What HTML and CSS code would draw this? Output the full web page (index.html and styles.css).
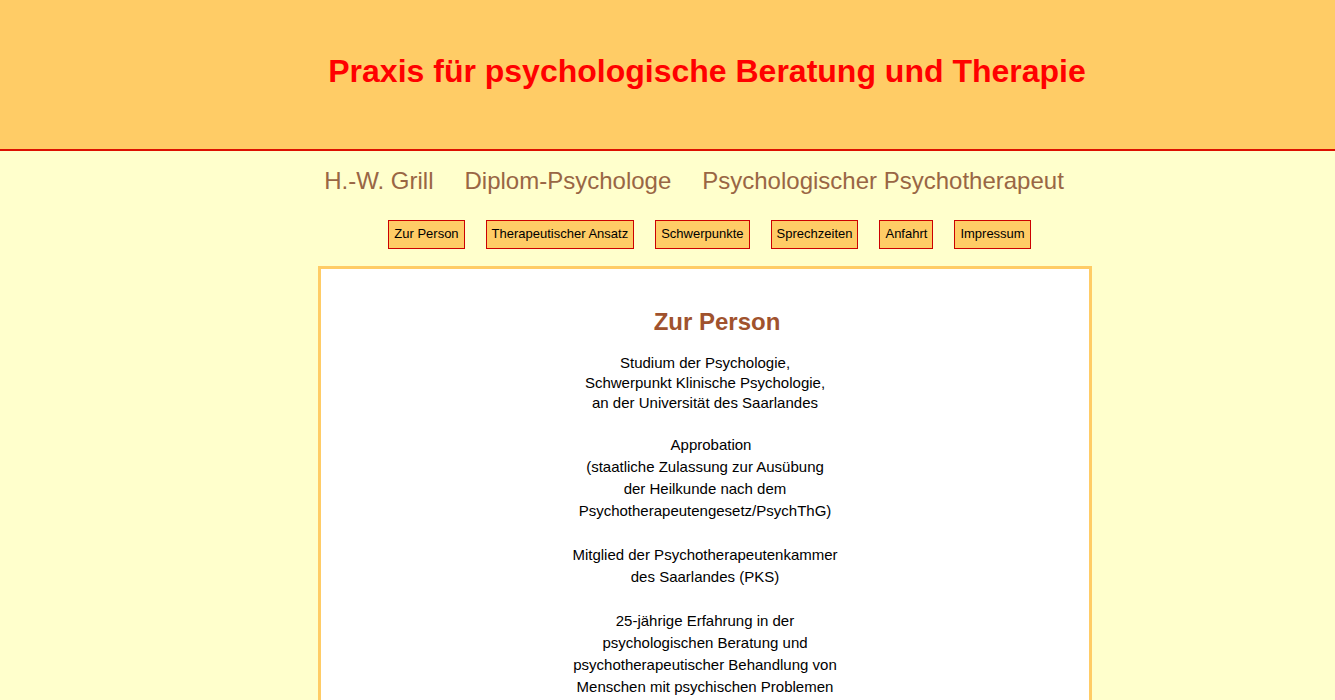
FILE: index.html
```html
<!DOCTYPE html>
<html lang="de">
<head>
<meta charset="utf-8">
<title>Praxis für psychologische Beratung und Therapie</title>
<link rel="stylesheet" href="styles.css">
</head>
<body>
<header class="site-header">
  <div class="wrap">
    <h1 class="site-title">Praxis für psychologische Beratung und Therapie</h1>
  </div>
</header>
<div class="wrap">
  <div class="subtitle">
    <span>H.-W. Grill</span>
    <span>Diplom-Psychologe</span>
    <span>Psychologischer Psychotherapeut</span>
  </div>
  <nav class="nav">
    <a class="nav-btn" href="#">Zur Person</a>
    <a class="nav-btn" href="#">Therapeutischer Ansatz</a>
    <a class="nav-btn" href="#">Schwerpunkte</a>
    <a class="nav-btn" href="#">Sprechzeiten</a>
    <a class="nav-btn" href="#">Anfahrt</a>
    <a class="nav-btn" href="#">Impressum</a>
  </nav>
  <main class="content">
    <h2 class="content-title">Zur Person</h2>
    <p class="para first">Studium der Psychologie,<br>Schwerpunkt Klinische Psychologie,<br>an der Universität des Saarlandes</p>
    <p class="para"><span class="indent">Approbation</span><br>(staatliche Zulassung zur Ausübung<br>der Heilkunde nach dem<br>Psychotherapeutengesetz/PsychThG)</p>
    <p class="para">Mitglied der Psychotherapeutenkammer<br>des Saarlandes (PKS)</p>
    <p class="para">25-jährige Erfahrung in der<br>psychologischen Beratung und<br>psychotherapeutischer Behandlung von<br>Menschen mit psychischen Problemen</p>
  </main>
</div>
</body>
</html>
```

FILE: styles.css
```css
html, body {
  margin: 0;
  padding: 0;
}
body {
  background: #ffffcc;
  font-family: "Liberation Sans", Arial, sans-serif;
  color: #000;
}
.wrap {
  width: 774px;
  margin-left: 318px;
}
.site-header {
  background: #ffcc66;
  border-bottom: 2px solid #dd1100;
  box-sizing: border-box;
  height: 151px;
}
.site-title {
  margin: 0;
  padding-top: 51px;
  padding-left: 4px;
  text-align: center;
  color: #ff0000;
  font-size: 32px;
  line-height: 40px;
  font-weight: bold;
}
.subtitle {
  display: flex;
  justify-content: center;
  gap: 31px;
  padding-top: 14px;
  padding-right: 22px;
  font-size: 24px;
  line-height: 32px;
  color: #996644;
}
.nav {
  display: flex;
  justify-content: center;
  gap: 21px;
  margin-top: 23px;
  padding-left: 9px;
}
.nav-btn {
  display: block;
  background: #ffcc66;
  border: 1px solid #cc0000;
  color: #000;
  text-decoration: none;
  font-size: 13px;
  line-height: 16px;
  padding: 5px 5px 6px;
}
.content {
  margin-top: 17px;
  background: #fff;
  border: 3px solid #ffcc66;
  border-bottom: none;
  min-height: 440px;
  text-align: center;
  padding-top: 38px;
}
.content-title {
  margin: 0 0 16px;
  padding-left: 24px;
  color: #a0522d;
  font-size: 24px;
  line-height: 30px;
  font-weight: bold;
}
.para {
  margin: 0 0 22px;
  font-size: 15px;
  line-height: 22px;
}
.para.first {
  line-height: 20px;
  margin-bottom: 21px;
}
.indent {
  padding-left: 12px;
}
```
